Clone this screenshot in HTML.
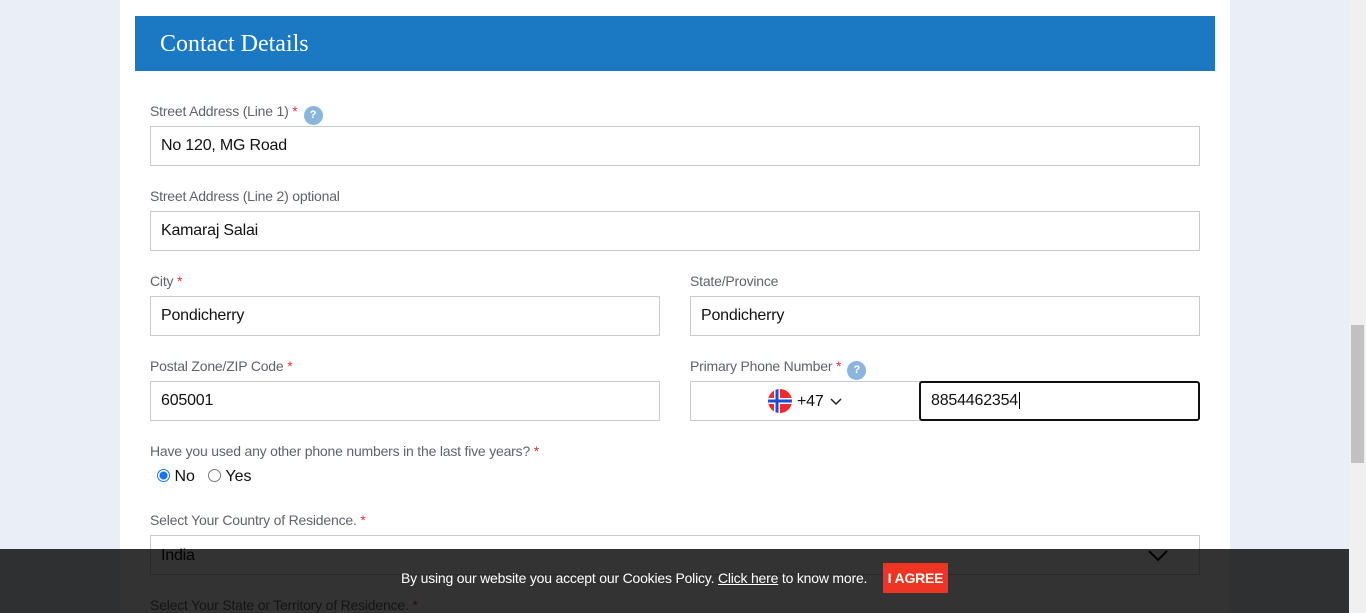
<!DOCTYPE html>
<html><head><meta charset="utf-8"><style>
*{box-sizing:border-box;margin:0;padding:0}
body{width:1366px;height:613px;overflow:hidden;background:#e9eef7;font-family:"Liberation Sans",sans-serif;position:relative}
.page{position:absolute;left:120px;top:0;width:1110px;height:613px;background:#fff}
.hdr{position:absolute;left:135px;top:16px;width:1080px;height:55px;background:#1b78c2;color:#fff;font-family:"Liberation Serif",serif;font-size:24px;padding-left:25px;line-height:56px}
.lbl{position:absolute;font-size:14px;color:#5f6368;white-space:nowrap;letter-spacing:-0.2px;line-height:16px}
.lbl .s{color:#e0303a}
.q{display:inline-block;width:19px;height:19px;border-radius:50%;background:#8ab6de;color:#fff;font-size:11px;font-weight:bold;text-align:center;line-height:19px;vertical-align:-3px;margin-left:6px;position:relative;top:-1px}
.in{position:absolute;height:40px;border:1px solid #c8cad1;font-size:16px;color:#111;padding-left:10px;line-height:38px;background:#fff;letter-spacing:-0.2px}
.scroll{position:absolute;left:1349px;top:0;width:17px;height:613px;background:#f0f0f0}
.thumb{position:absolute;left:1351px;top:325px;width:13px;height:138px;background:#c1c1c1}
.cookie{position:absolute;left:0;top:549px;width:1349px;height:64px;background:rgba(0,0,0,.8);color:#fff;font-size:14px;letter-spacing:-0.2px}
</style></head><body>
<div class="page"></div>
<div class="hdr">Contact Details</div>
<div class="lbl" style="left:150px;top:103px">Street Address (Line 1) <span class="s">*</span><span class="q">?</span></div>
<div class="in" style="left:150px;top:126px;width:1050px">No 120, MG Road</div>
<div class="lbl" style="left:150px;top:188px">Street Address (Line 2) optional</div>
<div class="in" style="left:150px;top:211px;width:1050px">Kamaraj Salai</div>
<div class="lbl" style="left:150px;top:273px">City <span class="s">*</span></div>
<div class="in" style="left:150px;top:296px;width:510px">Pondicherry</div>
<div class="lbl" style="left:690px;top:273px">State/Province</div>
<div class="in" style="left:690px;top:296px;width:510px">Pondicherry</div>
<div class="lbl" style="left:150px;top:358px">Postal Zone/ZIP Code <span class="s">*</span></div>
<div class="in" style="left:150px;top:381px;width:510px">605001</div>
<div class="lbl" style="left:690px;top:358px">Primary Phone Number <span class="s">*</span><span class="q">?</span></div>
<div class="in" style="left:690px;top:381px;width:232px;padding:0">
<svg style="position:absolute;left:77px;top:7px" width="24" height="24" viewBox="0 0 24 24"><defs><clipPath id="c"><circle cx="12" cy="12" r="12"/></clipPath></defs><g clip-path="url(#c)"><rect width="24" height="24" fill="#ef2b2d"/><rect x="6" width="6" height="24" fill="#fff"/><rect y="9" width="24" height="6" fill="#fff"/><rect x="7.5" width="3" height="24" fill="#1e4bd2"/><rect y="10.5" width="24" height="3" fill="#1e4bd2"/></g></svg>
<span style="position:absolute;left:106px;top:1px;font-size:16px">+47</span>
<svg style="position:absolute;left:139px;top:16px" width="12" height="8" viewBox="0 0 12 8"><path d="M1 1l5 5 5-5" fill="none" stroke="#222" stroke-width="1.5"/></svg>
</div>
<div class="in" style="left:919px;top:381px;width:281px;border:2px solid #111;border-radius:3px;line-height:36px">8854462354<span style="border-left:1px solid #000;margin-left:1px"></span></div>
<div class="lbl" style="left:150px;top:443px">Have you used any other phone numbers in the last five years? <span class="s">*</span></div>
<div style="position:absolute;left:157px;top:468px;font-size:16px;color:#111">
<span style="display:inline-block;width:13px;height:13px;border-radius:50%;border:1px solid #1a73e8;background:radial-gradient(#1a73e8 3.5px,#fff 4.5px);vertical-align:-1px"></span> No&nbsp;&nbsp;
<span style="display:inline-block;width:13px;height:13px;border-radius:50%;border:1px solid #777;vertical-align:-1px"></span> Yes</div>
<div class="lbl" style="left:150px;top:512px">Select Your Country of Residence. <span class="s">*</span></div>
<div class="in" style="left:150px;top:535px;width:1050px;line-height:40px">India
<svg style="position:absolute;left:997px;top:14px" width="20" height="12" viewBox="0 0 20 12"><path d="M1 1l9 9 9-9" fill="none" stroke="#111" stroke-width="2"/></svg></div>
<div class="lbl" style="left:150px;top:597px">Select Your State or Territory of Residence. <span class="s">*</span></div>
<div class="cookie">
<span style="position:absolute;left:401px;top:21px">By using our website you accept our Cookies Policy. <u>Click here</u> to know more.</span>
<span style="position:absolute;left:883px;top:14px;width:65px;height:30px;background:#ee3423;font-weight:bold;text-align:center;line-height:30px">I AGREE</span>
</div>
<div class="scroll"></div><div class="thumb"></div>
</body></html>
